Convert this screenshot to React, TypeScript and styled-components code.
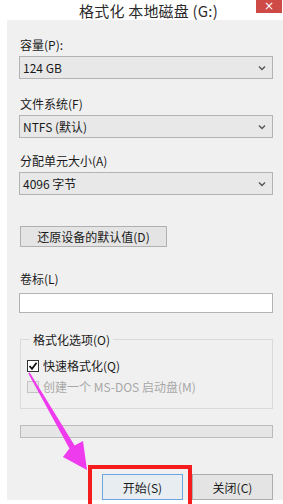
import React from "react";
import styled, { createGlobalStyle } from "styled-components";

const GlobalStyle = createGlobalStyle`
  html, body {
    margin: 0;
    padding: 0;
    background: #ffffff;
    overflow: hidden;
  }
  * {
    box-sizing: border-box;
  }
`;

const FONT = `"Noto Sans CJK SC", "Noto Sans", sans-serif`;

const Chevron = () => (
  <svg width="8" height="6" viewBox="0 0 8 6">
    <polyline points="1,1.5 4,4.5 7,1.5" fill="none" stroke="#555" strokeWidth="1.4" />
  </svg>
);

const CheckMark = () => (
  <svg width="10" height="10" viewBox="0 0 10 10">
    <polyline points="1.5,5 4,7.8 8.6,1.8" fill="none" stroke="#111" strokeWidth="1.8" />
  </svg>
);

const Field = ({ label, value, top }: { label: string; value: string; top: number }) => (
  <FieldWrap $top={top}>
    <Label>{label}</Label>
    <Select>
      <span>{value}</span>
      <Chevron />
    </Select>
  </FieldWrap>
);

const App = () => {
  return (
    <>
      <GlobalStyle />
      <Window>
        <TitleBar>
          <Title>格式化 本地磁盘 (G:)</Title>
          <CloseButton>×</CloseButton>
        </TitleBar>

        <Body>
          <Field label="容量(P):" value="124 GB" top={0} />
          <Field label="文件系统(F)" value="NTFS (默认)" top={17} />
          <Field label="分配单元大小(A)" value="4096 字节" top={15} />

          <ResetButton>还原设备的默认值(D)</ResetButton>

          <VolumeLabel>卷标(L)</VolumeLabel>
          <TextInput />

          <GroupBox>
            <Legend>格式化选项(O)</Legend>
            <CheckRow>
              <CheckBox>
                <CheckMark />
              </CheckBox>
              <span>快速格式化(Q)</span>
            </CheckRow>
            <CheckRow $disabled>
              <CheckBox $disabled />
              <span>创建一个 MS-DOS 启动盘(M)</span>
            </CheckRow>
          </GroupBox>

          <Progress />

          <Footer>
            <DialogButton $primary>开始(S)</DialogButton>
            <DialogButton>关闭(C)</DialogButton>
          </Footer>
        </Body>

        <Highlight />
        <Arrow width="283" height="504" viewBox="0 0 283 504">
          <polygon
            points="29.7,372.6 74.6,445.5 83,441 87,470 63,457 69.4,448.5 28.3,373.4"
            fill="#ee3bee"
          />
        </Arrow>
      </Window>
    </>
  );
};

const Window = styled.div`
  position: relative;
  width: 283px;
  height: 504px;
  background: #ffffff;
  font-family: ${FONT};
  overflow: hidden;
`;

const TitleBar = styled.div`
  height: 20px;
  display: flex;
  align-items: center;
  justify-content: center;
  padding-left: 14px;
  position: relative;
`;

const Title = styled.div`
  font-size: 15px;
  line-height: 20px;
  padding-top: 2px;
  color: #2b2b2b;
  letter-spacing: 0.2px;
`;

const CloseButton = styled.div`
  position: absolute;
  right: 1px;
  top: 0;
  width: 26px;
  height: 13px;
  background: #cd4a47;
  color: #ffffff;
  font-family: "DejaVu Sans", sans-serif;
  font-size: 12px;
  line-height: 12px;
  text-align: center;
`;

const Body = styled.div`
  margin-left: 7px;
  height: 480px;
  background: #f0f0f0;
  padding: 17px 10px 0 12px;
  display: flex;
  flex-direction: column;
  overflow: hidden;
  font-size: 12px;
  color: #1a1a1a;
`;

const FieldWrap = styled.div<{ $top: number }>`
  display: flex;
  flex-direction: column;
  gap: 3px;
  margin-top: ${(p) => p.$top}px;
`;

const Label = styled.div`
  height: 16px;
  line-height: 16px;
  padding-left: 1px;
`;

const Select = styled.div`
  height: 23px;
  border: 1px solid #b3b3b3;
  background: #e8e8e8;
  display: flex;
  align-items: center;
  justify-content: space-between;
  padding: 0 6px 0 3px;
  line-height: 16px;
`;

const ResetButton = styled.div`
  margin-top: 31px;
  margin-left: 1px;
  width: 147px;
  height: 26px;
  border: 1px solid #b0b0b0;
  background: #e4e4e4;
  display: flex;
  align-items: center;
  justify-content: center;
`;

const VolumeLabel = styled(Label)`
  margin-top: 24px;
`;

const TextInput = styled.div`
  margin-top: 6px;
  height: 24px;
  border: 1px solid #b3b3b3;
  background: #ffffff;
`;

const GroupBox = styled.fieldset`
  margin: 19px 0 0 1px;
  padding: 10px 6px 13px 6px;
  border: 1px solid #dadada;
  display: flex;
  flex-direction: column;
  gap: 5px;
  min-width: 0;
`;

const Legend = styled.legend`
  padding: 0 3px;
  margin-left: 3px;
  line-height: 16px;
  font-size: 12px;
  color: #1a1a1a;
`;

const CheckRow = styled.div<{ $disabled?: boolean }>`
  display: flex;
  align-items: center;
  gap: 4px;
  height: 16px;
  line-height: 16px;
  color: ${(p) => (p.$disabled ? "#a8a8a8" : "#1a1a1a")};
`;

const CheckBox = styled.div<{ $disabled?: boolean }>`
  width: 12px;
  height: 12px;
  border: 1px solid ${(p) => (p.$disabled ? "#c4c4c4" : "#333333")};
  background: ${(p) => (p.$disabled ? "#e8e8e8" : "#ffffff")};
  display: flex;
  align-items: center;
  justify-content: center;
  flex-shrink: 0;
`;

const Progress = styled.div`
  margin-top: 16px;
  margin-left: 1px;
  height: 16px;
  border: 1px solid #bcbcbc;
  background: #e6e6e6;
`;

const Footer = styled.div`
  margin-top: 36px;
  display: flex;
  justify-content: flex-end;
  gap: 9px;
`;

const DialogButton = styled.div<{ $primary?: boolean }>`
  width: 81px;
  height: 26px;
  flex-shrink: 0;
  border: 1px solid ${(p) => (p.$primary ? "#6aa6e0" : "#adadad")};
  background: ${(p) => (p.$primary ? "#e8edf2" : "#e4e4e4")};
  display: flex;
  align-items: center;
  justify-content: center;
`;

const Highlight = styled.div`
  position: absolute;
  left: 88px;
  top: 465px;
  width: 104px;
  height: 50px;
  border: 4px solid #f41c1c;
  border-bottom: none;
  pointer-events: none;
`;

const Arrow = styled.svg`
  position: absolute;
  left: 0;
  top: 0;
  pointer-events: none;
`;

export default App;
